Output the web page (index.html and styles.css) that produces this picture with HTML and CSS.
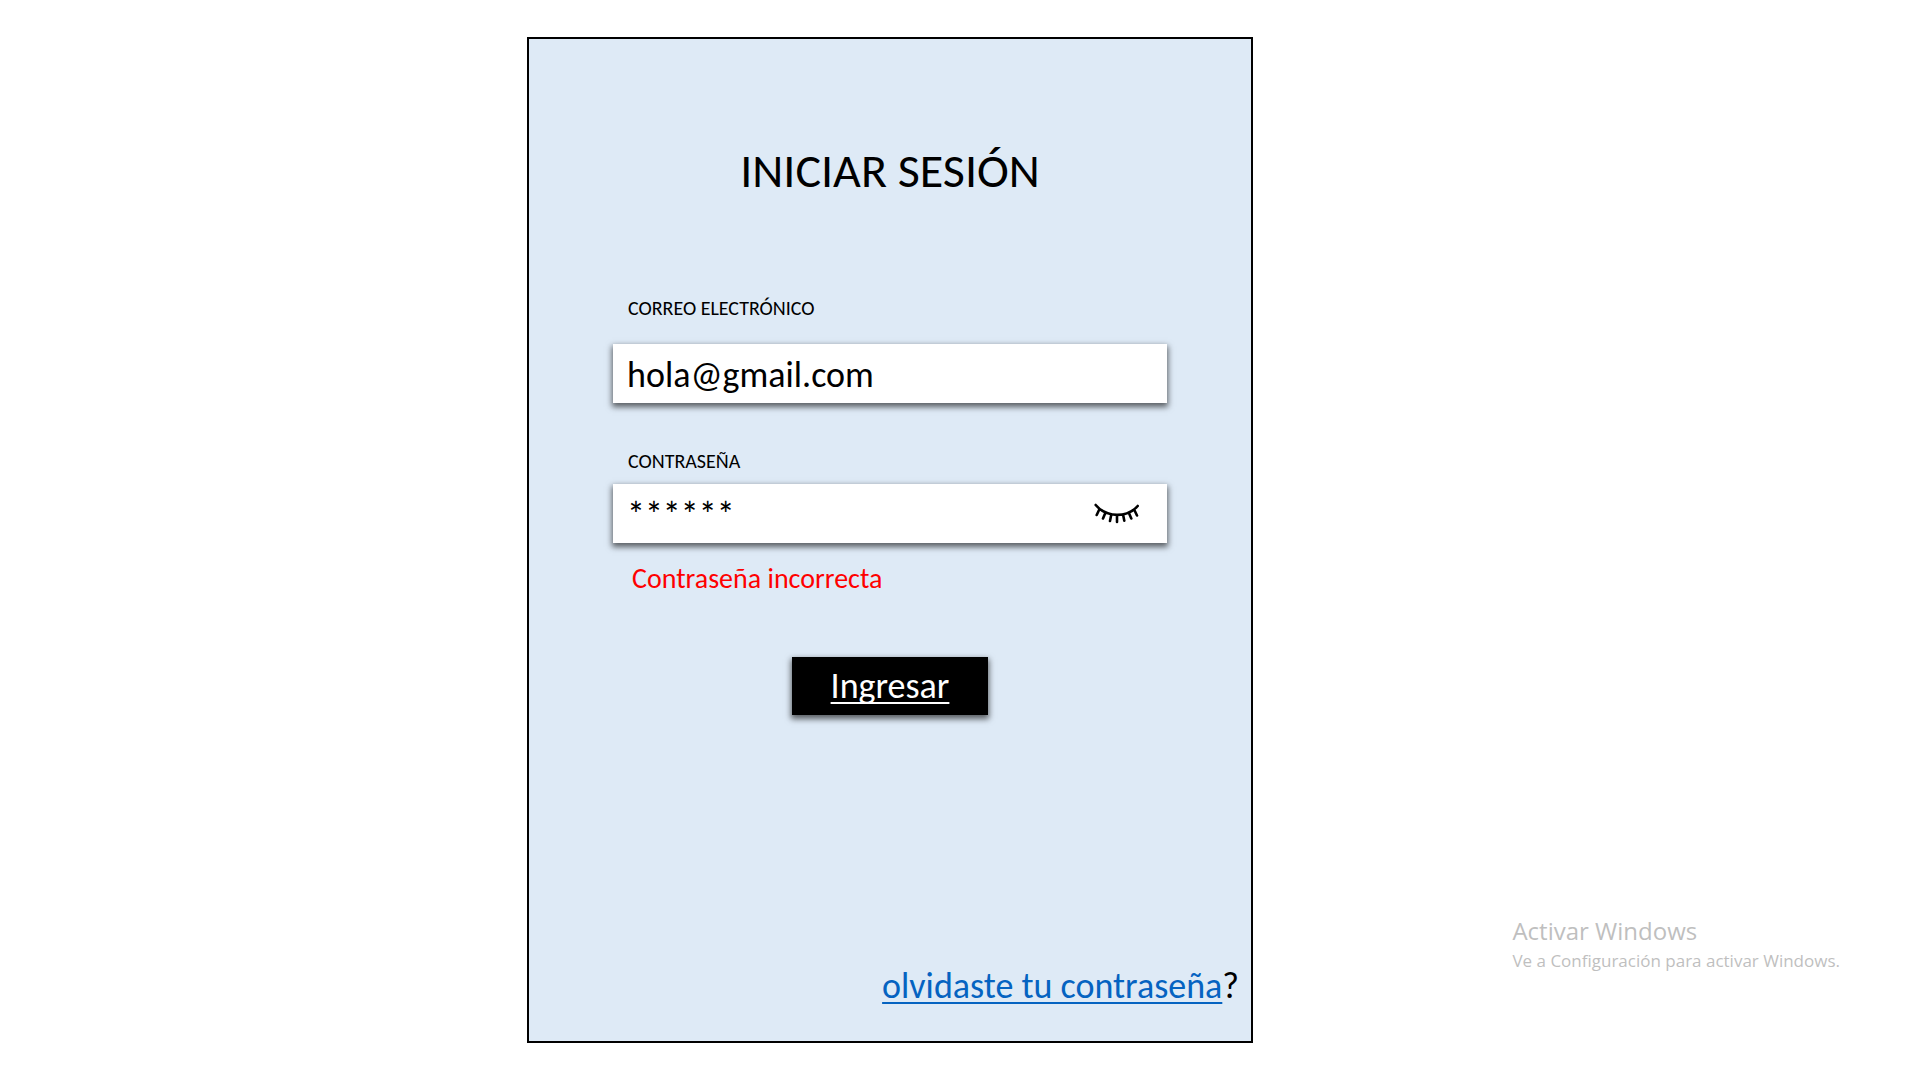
FILE: index.html
```html
<!DOCTYPE html>
<html lang="es">
<head>
  <meta charset="utf-8">
  <meta name="viewport" content="width=device-width, initial-scale=1">
  <title>Iniciar sesión</title>
  <link rel="stylesheet" href="styles.css">
</head>
<body>
  <div class="page">
    <main class="card">
      <h1 class="title">INICIAR SESIÓN</h1>
      <form class="form">
        <label class="label" for="email">CORREO ELECTRÓNICO</label>
        <div class="field field-email">
          <input class="input" id="email" type="text" value="hola@gmail.com">
        </div>
        <label class="label" for="password">CONTRASEÑA</label>
        <div class="field field-password">
          <input class="input" id="password" type="text" value="******" aria-describedby="error">
          <button class="toggle" type="button" aria-label="Mostrar contraseña">
            <svg class="eye" viewBox="0 0 48 22" aria-hidden="true">
              <path d="M2.700 2C14 15 34 15 44.700 3M6.500 6L3.700 12M12.500 9.500L10 15.500M18.300 11.500L17 18M24 12V19M30 11.300L31.300 17.700M35.700 9.500L38.300 15.500M41 6.300L44 12.500"/>
            </svg>
          </button>
        </div>
        <p class="error" id="error">Contraseña incorrecta</p>
        <button class="submit" type="submit">Ingresar</button>
      </form>
      <p class="forgot"><a class="link" href="#">olvidaste tu contraseña</a>?</p>
    </main>
    <aside class="notice">
      <p class="notice-title">Activar Windows</p>
      <p class="notice-text">Ve a Configuración para activar Windows.</p>
    </aside>
  </div>
</body>
</html>
```
FILE: styles.css
```css
* {
  box-sizing: border-box;
}

body {
  margin: 0;
  background: #fff;
  color: #000;
  font-family: Carlito, Lato, sans-serif;
}

h1,
p {
  margin: 0;
}

.page {
  display: grid;
  grid-template-columns: 527fr minmax(300px, 726fr) 667fr;
  min-height: 100vh;
  padding: 37px 0;
}

.card {
  grid-column: 2;
  display: flex;
  flex-direction: column;
  padding: 104px 12px 33px 84px;
  border: 2px solid #000;
  background: #deeaf6;
}

.title {
  margin-right: 72px;
  font-size: 48px;
  font-weight: 400;
  line-height: 56px;
  text-align: center;
}

.form {
  display: flex;
  flex-direction: column;
  margin: 97px 72px 0 0;
}

.label {
  padding-left: 15px;
  font-size: 20px;
  line-height: 24px;
}

.field {
  display: flex;
  height: 59px;
  background: #fff;
  box-shadow: 0 3px 6px 1px rgba(0, 0, 0, 0.6);
}

.field-email {
  margin: 24px 0 46px;
}

.field-password {
  margin-top: 11px;
}

.input {
  flex: 1;
  min-width: 0;
  padding: 2px 0 0 14px;
  border: 0;
  background: none;
  color: inherit;
  font-family: inherit;
  font-size: 36px;
  line-height: 44px;
}

.toggle {
  display: flex;
  align-self: center;
  margin-right: 26px;
  padding: 0;
  border: 0;
  background: none;
}

.eye {
  width: 48px;
  height: 22px;
  fill: none;
  stroke: #000;
  stroke-width: 2.600;
  stroke-linecap: round;
}

.error {
  margin-top: 20px;
  padding-left: 19px;
  color: #f00;
  font-size: 28px;
  line-height: 32px;
}

.submit {
  align-self: center;
  width: 196px;
  height: 58px;
  margin-top: 62px;
  padding: 0;
  border: 0;
  background: #000;
  box-shadow: 0 3px 6px 1px rgba(0, 0, 0, 0.6);
  color: #fff;
  font-family: inherit;
  font-size: 36px;
  line-height: 44px;
}

.submit,
.link {
  text-decoration: underline;
  text-decoration-thickness: 2px;
  text-decoration-skip-ink: none;
  text-underline-offset: 4px;
}

.forgot {
  margin-top: auto;
  font-size: 36px;
  line-height: 44px;
  text-align: right;
}

.link {
  color: #0563c1;
}

.notice {
  grid-column: 3;
  align-self: end;
  justify-self: end;
  margin: 0 80px 70px 0;
  color: #bfbfbf;
  font-family: "Segoe UI", "Open Sans", sans-serif;
}

.notice-title {
  font-size: 24px;
  line-height: 36px;
}

.notice-text {
  font-size: 17px;
  line-height: 24px;
}
```
